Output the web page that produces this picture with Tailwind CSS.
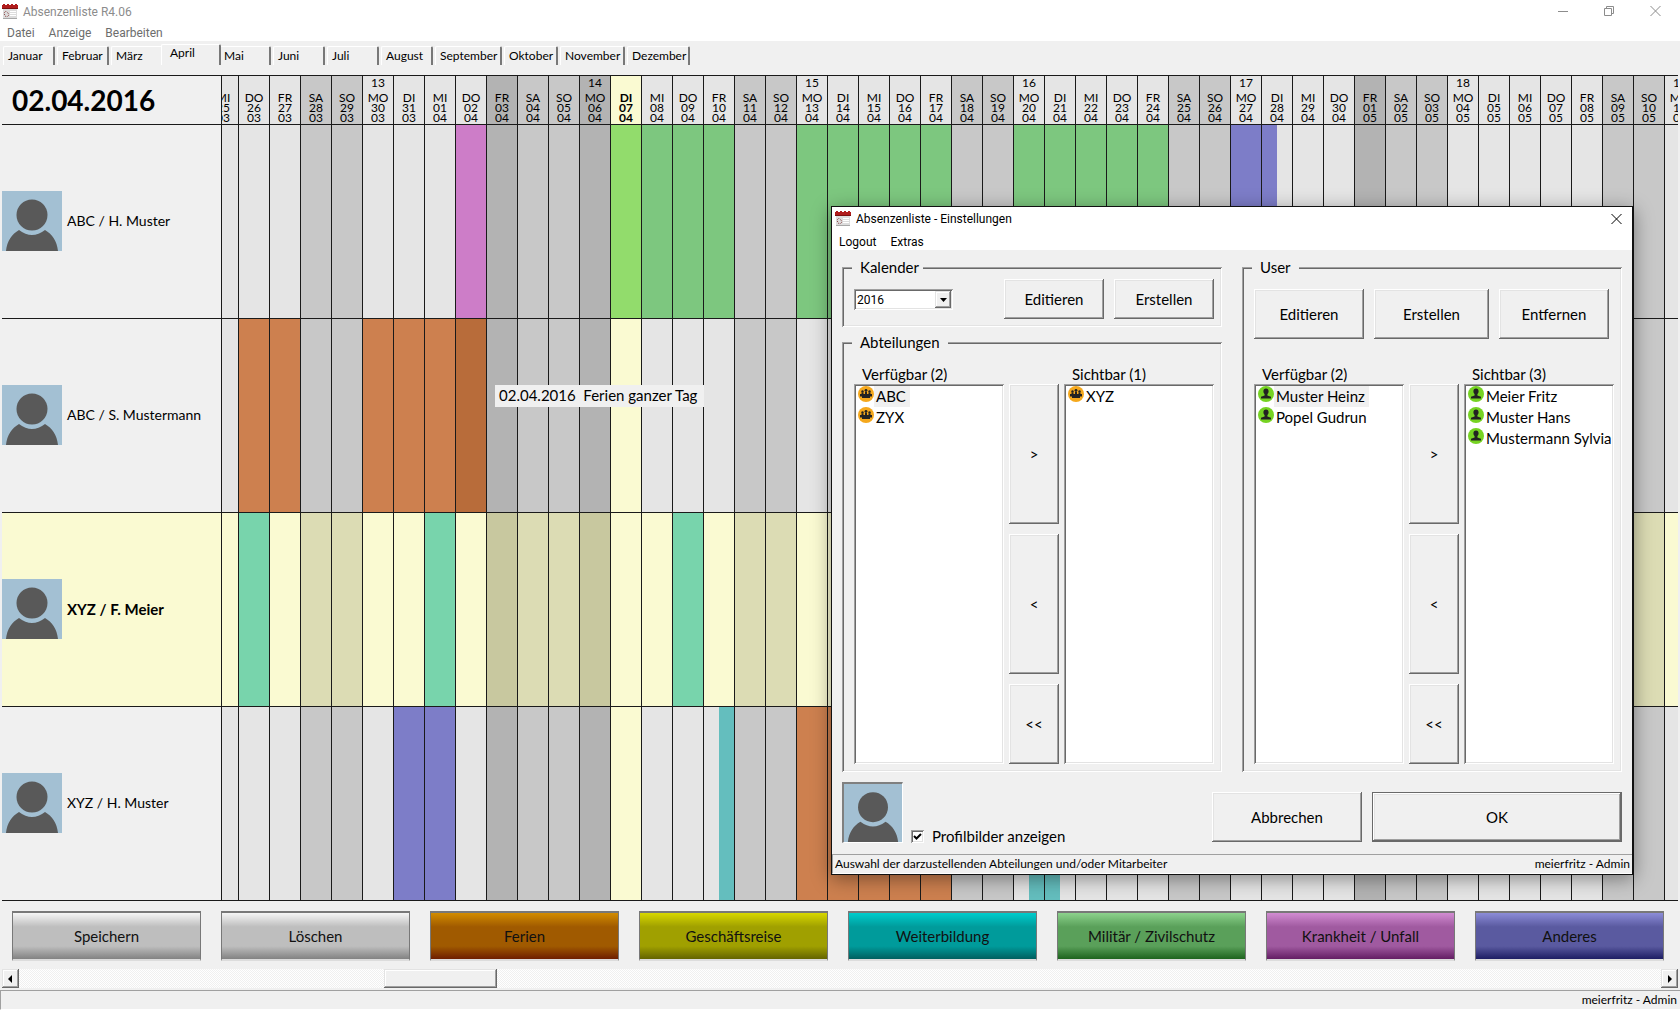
<!DOCTYPE html>
<html lang="de">
<head>
  <meta charset="UTF-8">
  <meta name="viewport" content="width=device-width, initial-scale=1.0">
  <title>Absenzenliste R4.06</title>
  <script src="https://cdn.jsdelivr.net/npm/@tailwindcss/browser@4"></script>
</head>
<body class="h-screen overflow-hidden bg-[#f0f0f0] font-['Lato',sans-serif] text-[15px] leading-5 text-black">

  <!-- Icons -->
  <svg class="hidden">
    <symbol id="icon-kalender" viewBox="0 0 16 16">
      <rect x="1" y="4" width="14" height="11" fill="#dcdcdc"/>
      <rect x="1" y="14" width="14" height="1" fill="#a8a8a8"/>
      <path d="M0 1h1V0h2v1h2V0h2v1h2V0h2v1h2V0h2v1h1v4H0z" fill="#b01c1c"/>
      <rect y="4" width="16" height="1" fill="#7c1010"/>
      <path d="M8 7.500h6M8 9.500h6M8 11.500h6" stroke="#fff"/>
      <path d="M2 9l2-2 2 2 1 2-2 2-2-1z" fill="none" stroke="#8c4646" stroke-dasharray="1 1"/>
    </symbol>
    <symbol id="icon-profil" viewBox="0 0 60 60">
      <rect width="60" height="60" fill="#a3c0d3"/>
      <circle cx="30" cy="24" r="15.5" fill="#595959"/>
      <path d="M4 60C5 50 10 43 17 39Q30 49 43 39C50 43 55 50 56 60Z" fill="#595959"/>
    </symbol>
    <symbol id="icon-abteilung" viewBox="0 0 16 16">
      <circle cx="8" cy="8" r="8" fill="#f5a81c"/>
      <g fill="#222">
        <circle cx="4.5" cy="5.500" r="1.2"/><circle cx="8" cy="4.300" r="1.4"/><circle cx="11.5" cy="5.500" r="1.2"/>
        <path d="M3.500 6.500h2V8h-2zM7 5.500h2V8H7zM10.500 6.500h2V8h-2zM2 8h12v2.500H2zM4 10h8v2H4z"/>
      </g>
    </symbol>
    <symbol id="icon-user" viewBox="0 0 16 16">
      <circle cx="8" cy="8" r="8" fill="#76d322"/>
      <path d="M8 2.500c1.700 0 2.600 1.200 2.600 2.800 0 1.400-.6 2.200-1.200 2.900v1.300l3.600 1.300v1.700H3v-1.700l3.600-1.300V8.200C6 7.500 5.400 6.700 5.400 5.300 5.400 3.700 6.300 2.500 8 2.500z" fill="#222"/>
    </symbol>
  </svg>

  <div class="flex h-full flex-col">
    <!-- Titel und Menü -->
    <header class="h-[41px] bg-white font-['Roboto',sans-serif] text-xs text-[#8c8c8c]">
      <div class="flex h-6 items-center pl-0.5">
        <svg class="size-4"><use href="#icon-kalender"/></svg>
        <h1 class="ml-[5px]">Absenzenliste R4.06</h1>
        <div class="ml-auto flex gap-[34px] pr-[18px]">
          <button aria-label="Minimieren"><svg class="size-3 overflow-visible" fill="none" stroke="#8c8c8c"><path d="M0 5.500h10"/></svg></button>
          <button aria-label="Wiederherstellen"><svg class="size-3 overflow-visible" fill="none" stroke="#8c8c8c"><path d="M.5 2.500h7v7h-7zM2.500 2V.5h7v7H8"/></svg></button>
          <button aria-label="Schliessen"><svg class="size-3 overflow-visible" fill="none" stroke="#8c8c8c"><path d="M.5 0l10 10M10.500 0l-10 10"/></svg></button>
        </div>
      </div>
      <nav class="flex h-[17px] items-center gap-[14px] pl-[7px] text-[#6d6d6d]">
        <button>Datei</button>
        <button>Anzeige</button>
        <button>Bearbeiten</button>
      </nav>
    </header>

    <!-- Monate -->
    <div id="monate" role="tablist" class="flex h-[34px] items-start gap-0.5 pl-[3px] pt-[3px] text-xs"></div>

    <!-- Absenzen -->
    <main class="mx-0.5 min-h-0 flex-1 overflow-hidden">
      <table class="h-full w-[1694px] table-fixed border-separate border-spacing-0 border-t border-[#1a1a1a]">
        <colgroup id="spalten">
          <col class="w-[220px]">
          <col class="w-[17px]">
        </colgroup>
        <thead>
          <tr id="kopf" class="h-[49px]">
            <th class="border-r border-b border-[#1a1a1a] pl-[10px] text-left text-[28px] font-bold">02.04.2016</th>
          </tr>
        </thead>
        <tbody id="zeilen"></tbody>
      </table>
    </main>

    <!-- Absenztypen -->
    <div class="flex h-[68px] items-start gap-5 pt-[10px] pr-4 pl-3 text-[#111]">
      <button class="h-[50px] min-w-0 flex-1 border-x border-t-2 border-b-2 border-[#787878] border-b-[#dcdcdc] bg-[linear-gradient(#f5f5f5,#bebebe_30%,#bebebe_72%,#828282)]">Speichern</button>
      <button class="h-[50px] min-w-0 flex-1 border-x border-t-2 border-b-2 border-[#787878] border-b-[#dcdcdc] bg-[linear-gradient(#f5f5f5,#bebebe_30%,#bebebe_72%,#828282)]">Löschen</button>
      <button class="h-[50px] min-w-0 flex-1 border-x border-t-2 border-b-2 border-[#787878] border-b-[#dcdcdc] bg-[linear-gradient(#d28c00,#a05a00_30%,#a05a00_72%,#6e1e00)]">Ferien</button>
      <button class="h-[50px] min-w-0 flex-1 border-x border-t-2 border-b-2 border-[#787878] border-b-[#dcdcdc] bg-[linear-gradient(#d7d700,#a0a000_30%,#a0a000_72%,#646400)]">Geschäftsreise</button>
      <button class="h-[50px] min-w-0 flex-1 border-x border-t-2 border-b-2 border-[#787878] border-b-[#dcdcdc] bg-[linear-gradient(#00cdcd,#009b9b_30%,#009b9b_72%,#005f5f)]">Weiterbildung</button>
      <button class="h-[50px] min-w-0 flex-1 border-x border-t-2 border-b-2 border-[#787878] border-b-[#dcdcdc] bg-[linear-gradient(#8cd28c,#5aa05a_30%,#5aa05a_72%,#1e641e)]">Militär / Zivilschutz</button>
      <button class="h-[50px] min-w-0 flex-1 border-x border-t-2 border-b-2 border-[#787878] border-b-[#dcdcdc] bg-[linear-gradient(#d28cd2,#a05aa0_30%,#a05aa0_72%,#641e64)]">Krankheit / Unfall</button>
      <button class="h-[50px] min-w-0 flex-1 border-x border-t-2 border-b-2 border-[#787878] border-b-[#dcdcdc] bg-[linear-gradient(#8c8cd7,#5a5aa0_30%,#5a5aa0_72%,#1e1e64)]">Anderes</button>
    </div>

    <!-- Bildlaufleiste -->
    <div class="mx-0.5 flex h-[19px] bg-[repeating-conic-gradient(#f0f0f0_0_25%,#fff_0_50%)] bg-[length:2px_2px]">
      <button aria-label="Zurück" class="flex w-[17px] items-center justify-center bg-[#f0f0f0] pr-0.5 shadow-[inset_-1px_-1px_0_#696969,inset_1px_1px_0_#e3e3e3,inset_-2px_-2px_0_#a0a0a0,inset_2px_2px_0_#fff]">
        <svg class="h-2 w-1"><path d="M4 0v8L0 4z"/></svg>
      </button>
      <div class="flex-1 pl-[365px]">
        <div class="h-full w-[113px] bg-[#f0f0f0] shadow-[inset_-1px_-1px_0_#696969,inset_1px_1px_0_#e3e3e3,inset_-2px_-2px_0_#a0a0a0,inset_2px_2px_0_#fff]"></div>
      </div>
      <button aria-label="Vorwärts" class="flex w-[17px] items-center justify-center bg-[#f0f0f0] shadow-[inset_-1px_-1px_0_#696969,inset_1px_1px_0_#e3e3e3,inset_-2px_-2px_0_#a0a0a0,inset_2px_2px_0_#fff]">
        <svg class="h-2 w-1"><path d="M0 0v8l4-4z"/></svg>
      </button>
    </div>

    <footer class="mt-0.5 flex h-5 items-center justify-end border-t border-b border-l border-[#a0a0a0] border-b-white pr-[3px] text-xs">meierfritz - Admin</footer>
  </div>

  <!-- Einstellungen -->
  <section role="dialog" aria-labelledby="dialog-titel" class="absolute top-[206px] left-[831px] flex w-[803px] flex-col border border-r-2 border-[#111] bg-[#f0f0f0] shadow-[0_4px_18px_rgba(0,0,0,0.4)]">
    <div class="bg-white font-['Roboto',sans-serif] text-xs">
      <div class="flex h-6 items-center pl-[3px]">
        <svg class="size-4"><use href="#icon-kalender"/></svg>
        <h2 id="dialog-titel" class="ml-[5px]">Absenzenliste - Einstellungen</h2>
        <button aria-label="Schliessen" class="mr-[9px] ml-auto"><svg class="size-3 overflow-visible" fill="none" stroke="#000"><path d="M.5 1l10 10M10.500 1l-10 10"/></svg></button>
      </div>
      <nav class="flex h-[19px] items-center gap-[14px] pt-0.5 pl-[7px]">
        <button>Logout</button>
        <button>Extras</button>
      </nav>
    </div>

    <div class="flex justify-between px-[10px] pt-[17px]">
      <div class="flex w-[380px] flex-col gap-[15px]">
        <fieldset class="relative flex h-[60px] items-start gap-[10px] pt-3 pr-2 pl-3 shadow-[inset_1px_1px_0_#a0a0a0,inset_-1px_-1px_0_#fff,inset_2px_2px_0_#696969,inset_-2px_-2px_0_#e3e3e3]">
          <legend class="absolute -top-[10px] left-[10px] bg-[#f0f0f0] pr-1 pl-2">Kalender</legend>
          <div class="relative mt-[10px] mr-auto">
            <select aria-label="Kalenderjahr" class="block h-[21px] w-[99px] appearance-none rounded-none bg-white pl-[3px] font-['Roboto',sans-serif] text-xs shadow-[inset_1px_1px_0_#a0a0a0,inset_-1px_-1px_0_#fff,inset_2px_2px_0_#696969,inset_-2px_-2px_0_#e3e3e3]">
              <option>2016</option>
            </select>
            <span class="pointer-events-none absolute top-0.5 right-0.5 flex h-[17px] w-4 items-center justify-center bg-[#f0f0f0] shadow-[inset_-1px_-1px_0_#696969,inset_1px_1px_0_#e3e3e3,inset_-2px_-2px_0_#a0a0a0,inset_2px_2px_0_#fff]">
              <svg class="h-1 w-[7px]"><path d="M0 0h7L3.500 4z"/></svg>
            </span>
          </div>
          <button class="h-10 w-[100px] pb-px shadow-[inset_-1px_-1px_0_#696969,inset_1px_1px_0_#fff,inset_-2px_-2px_0_#a0a0a0,inset_2px_2px_0_#e3e3e3]">Editieren</button>
          <button class="h-10 w-[100px] pb-px shadow-[inset_-1px_-1px_0_#696969,inset_1px_1px_0_#fff,inset_-2px_-2px_0_#a0a0a0,inset_2px_2px_0_#e3e3e3]">Erstellen</button>
        </fieldset>

        <fieldset class="relative h-[430px] pt-[22px] pr-2 pl-3 shadow-[inset_1px_1px_0_#a0a0a0,inset_-1px_-1px_0_#fff,inset_2px_2px_0_#696969,inset_-2px_-2px_0_#e3e3e3]">
          <legend class="absolute -top-[10px] left-[10px] bg-[#f0f0f0] px-2">Abteilungen</legend>
          <div class="grid grid-cols-[150px_50px_150px] gap-x-[5px]">
            <h3 class="pl-2">Verfügbar (2)</h3>
            <h3 class="col-start-3 pl-2">Sichtbar (1)</h3>
            <ul class="h-[380px] bg-white px-1 pt-0.5 shadow-[inset_1px_1px_0_#a0a0a0,inset_-1px_-1px_0_#fff,inset_2px_2px_0_#696969,inset_-2px_-2px_0_#e3e3e3]">
              <li class="flex h-[21px]"><svg class="size-4"><use href="#icon-abteilung"/></svg><span class="bg-[#f0f0f0] pr-1 pl-0.5">ABC</span></li>
              <li class="flex h-[21px]"><svg class="size-4"><use href="#icon-abteilung"/></svg><span class="pl-0.5">ZYX</span></li>
            </ul>
            <div class="grid grid-rows-[140px_140px_80px] gap-[10px]">
              <button class="pb-px shadow-[inset_-1px_-1px_0_#696969,inset_1px_1px_0_#fff,inset_-2px_-2px_0_#a0a0a0,inset_2px_2px_0_#e3e3e3]">&gt;</button>
              <button class="pb-px shadow-[inset_-1px_-1px_0_#696969,inset_1px_1px_0_#fff,inset_-2px_-2px_0_#a0a0a0,inset_2px_2px_0_#e3e3e3]">&lt;</button>
              <button class="pb-px shadow-[inset_-1px_-1px_0_#696969,inset_1px_1px_0_#fff,inset_-2px_-2px_0_#a0a0a0,inset_2px_2px_0_#e3e3e3]">&lt;&lt;</button>
            </div>
            <ul class="h-[380px] bg-white px-1 pt-0.5 shadow-[inset_1px_1px_0_#a0a0a0,inset_-1px_-1px_0_#fff,inset_2px_2px_0_#696969,inset_-2px_-2px_0_#e3e3e3]">
              <li class="flex h-[21px]"><svg class="size-4"><use href="#icon-abteilung"/></svg><span class="pl-0.5">XYZ</span></li>
            </ul>
          </div>
        </fieldset>
      </div>

      <fieldset class="relative flex w-[380px] flex-col justify-between pt-[22px] pr-2 pb-2 pl-3 shadow-[inset_1px_1px_0_#a0a0a0,inset_-1px_-1px_0_#fff,inset_2px_2px_0_#696969,inset_-2px_-2px_0_#e3e3e3]">
        <legend class="absolute -top-[10px] left-[10px] bg-[#f0f0f0] px-2">User</legend>
        <div class="grid h-[50px] grid-cols-[110px_115px_110px] gap-[10px]">
          <button class="pb-px shadow-[inset_-1px_-1px_0_#696969,inset_1px_1px_0_#fff,inset_-2px_-2px_0_#a0a0a0,inset_2px_2px_0_#e3e3e3]">Editieren</button>
          <button class="pb-px shadow-[inset_-1px_-1px_0_#696969,inset_1px_1px_0_#fff,inset_-2px_-2px_0_#a0a0a0,inset_2px_2px_0_#e3e3e3]">Erstellen</button>
          <button class="pb-px shadow-[inset_-1px_-1px_0_#696969,inset_1px_1px_0_#fff,inset_-2px_-2px_0_#a0a0a0,inset_2px_2px_0_#e3e3e3]">Entfernen</button>
        </div>
        <div class="grid grid-cols-[150px_50px_150px] gap-x-[5px]">
          <h3 class="pl-2">Verfügbar (2)</h3>
          <h3 class="col-start-3 pl-2">Sichtbar (3)</h3>
          <ul class="h-[380px] bg-white px-1 pt-0.5 shadow-[inset_1px_1px_0_#a0a0a0,inset_-1px_-1px_0_#fff,inset_2px_2px_0_#696969,inset_-2px_-2px_0_#e3e3e3]">
            <li class="flex h-[21px]"><svg class="size-4"><use href="#icon-user"/></svg><span class="bg-[#f0f0f0] pr-1 pl-0.5">Muster Heinz</span></li>
            <li class="flex h-[21px]"><svg class="size-4"><use href="#icon-user"/></svg><span class="pl-0.5">Popel Gudrun</span></li>
          </ul>
          <div class="grid grid-rows-[140px_140px_80px] gap-[10px]">
            <button class="pb-px shadow-[inset_-1px_-1px_0_#696969,inset_1px_1px_0_#fff,inset_-2px_-2px_0_#a0a0a0,inset_2px_2px_0_#e3e3e3]">&gt;</button>
            <button class="pb-px shadow-[inset_-1px_-1px_0_#696969,inset_1px_1px_0_#fff,inset_-2px_-2px_0_#a0a0a0,inset_2px_2px_0_#e3e3e3]">&lt;</button>
            <button class="pb-px shadow-[inset_-1px_-1px_0_#696969,inset_1px_1px_0_#fff,inset_-2px_-2px_0_#a0a0a0,inset_2px_2px_0_#e3e3e3]">&lt;&lt;</button>
          </div>
          <ul class="h-[380px] bg-white px-1 pt-0.5 whitespace-nowrap shadow-[inset_1px_1px_0_#a0a0a0,inset_-1px_-1px_0_#fff,inset_2px_2px_0_#696969,inset_-2px_-2px_0_#e3e3e3]">
            <li class="flex h-[21px]"><svg class="size-4 shrink-0"><use href="#icon-user"/></svg><span class="pl-0.5">Meier Fritz</span></li>
            <li class="flex h-[21px]"><svg class="size-4 shrink-0"><use href="#icon-user"/></svg><span class="pl-0.5">Muster Hans</span></li>
            <li class="flex h-[21px]"><svg class="size-4 shrink-0"><use href="#icon-user"/></svg><span class="pl-0.5">Mustermann Sylvia</span></li>
          </ul>
        </div>
      </fieldset>
    </div>

    <div class="flex gap-2 px-[10px] pt-[10px] pb-[11px]">
      <div class="border-t-2 border-l-2 border-r border-b border-[#808080] border-r-white border-b-white"><svg class="size-[58px]"><use href="#icon-profil"/></svg></div>
      <label class="mr-auto flex items-center gap-2 self-end leading-[14px]">
        <input type="checkbox" checked class="peer size-[13px] appearance-none bg-white shadow-[inset_1px_1px_0_#a0a0a0,inset_-1px_-1px_0_#fff,inset_2px_2px_0_#696969,inset_-2px_-2px_0_#e3e3e3]">
        <svg class="pointer-events-none absolute hidden size-[13px] peer-checked:block" fill="none" stroke="#000" stroke-width="2"><path d="M3 6l2.500 2.500L10 4"/></svg>
        Profilbilder anzeigen
      </label>
      <div class="flex gap-[10px] pt-[10px]">
        <button class="h-[50px] w-[150px] pb-px shadow-[inset_-1px_-1px_0_#696969,inset_1px_1px_0_#fff,inset_-2px_-2px_0_#a0a0a0,inset_2px_2px_0_#e3e3e3]">Abbrechen</button>
        <button class="h-[50px] w-[250px] border border-[#696969] pb-px shadow-[inset_-1px_-1px_0_#696969,inset_1px_1px_0_#fff,inset_-2px_-2px_0_#a0a0a0,inset_2px_2px_0_#e3e3e3]">OK</button>
      </div>
    </div>

    <div class="flex h-5 items-center justify-between border-t border-b border-l border-[#a0a0a0] border-b-white px-0.5 text-xs">
      <span>Auswahl der darzustellenden Abteilungen und/oder Mitarbeiter</span>
      <span>meierfritz - Admin</span>
    </div>
  </section>

  <script>
    const monate = [
      ["Januar", "w-[52px]"], ["Februar", "w-[52px]"], ["März", "w-[52px]"], ["April", "w-[60px]"],
      ["Mai", "w-[52px]"], ["Juni", "w-[52px]"], ["Juli", "w-[52px]"], ["August", "w-[52px]"],
      ["September", "w-[67px]"], ["Oktober", "w-[54px]"], ["November", "w-[65px]"], ["Dezember", "w-[63px]"]
    ];
    document.getElementById("monate").innerHTML = monate.map(([name, breite]) => {
      const aktiv = name === "April";
      const form = aktiv ? "z-10 -mr-1 -ml-1 h-[21px] pb-1 pl-2" : "mt-0.5 h-[19px] pl-1";
      return `<button role="tab" aria-selected="${aktiv}" class="${breite} ${form} shrink-0 rounded-t-xs border-t border-l border-r-2 border-white border-r-[#787878] bg-[#f0f0f0] text-left leading-4">${name}</button>`;
    }).join("");

    // Tage vom 25.03. bis 11.05.
    const wochentage = ["MI", "DO", "FR", "SA", "SO", "MO", "DI"];
    const feiertage = ["03.04", "06.04", "01.05"];
    const heute = "07.04";
    const zwei = n => String(n).padStart(2, "0");
    const tage = [];
    let woche = 13;
    for (let i = 0; i < 48; i++) {
      let tag = 25 + i, monat = 3;
      if (tag > 31) { tag -= 31; monat = 4; }
      if (monat === 4 && tag > 30) { tag -= 30; monat = 5; }
      const name = wochentage[i % 7];
      const id = zwei(tag) + "." + zwei(monat);
      let art = "normal";
      if (name === "SA" || name === "SO") art = "wochenende";
      if (feiertage.includes(id)) art = "feiertag";
      if (id === heute) art = "heute";
      tage.push({ id, name, art, tag: zwei(tag), monat: zwei(monat), woche: name === "MO" ? woche++ : "" });
    }

    const farben = { normal: "bg-[#e5e5e5]", wochenende: "bg-[#c8c8c8]", feiertag: "bg-[#b3b3b3]", heute: "bg-[#fafad2]" };
    const farbenEigene = { normal: "bg-[#fafad2]", wochenende: "bg-[#dcdcb4]", feiertag: "bg-[#c8c89f]", heute: "bg-[#fafad2]" };
    const ferien = "bg-[#cd804f]", ferienAktiv = "bg-[#b86c3a]", militaer = "bg-[#7dc77f]", militaerHeute = "bg-[#92dc6c]";
    const krank = "bg-[#cd7dc8]", anderes = "bg-[#7d7dc8]", kurs = "bg-[#64bebe]", kursEigen = "bg-[#78d4ac]";

    const personen = [
      { name: "ABC / H. Muster", tage: {
        "02.04": krank, "07.04": militaerHeute, "08.04": militaer, "09.04": militaer, "10.04": militaer,
        "13.04": militaer, "14.04": militaer, "15.04": militaer, "16.04": militaer, "17.04": militaer,
        "20.04": militaer, "21.04": militaer, "22.04": militaer, "23.04": militaer, "24.04": militaer,
        "27.04": anderes }, halb: { "28.04": anderes + " left-0" } },
      { name: "ABC / S. Mustermann", tage: {
        "26.03": ferien, "27.03": ferien, "30.03": ferien, "31.03": ferien, "01.04": ferien, "02.04": ferienAktiv },
        halb: {}, hinweis: "02.04" },
      { name: "XYZ / F. Meier", eigene: true, tage: { "26.03": kursEigen, "01.04": kursEigen, "09.04": kursEigen }, halb: {} },
      { name: "XYZ / H. Muster", tage: {
        "31.03": anderes, "01.04": anderes,
        "13.04": ferien, "14.04": ferien, "15.04": ferien, "16.04": ferien, "17.04": ferien },
        halb: { "10.04": kurs + " right-0", "20.04": kurs + " right-0", "21.04": kurs + " left-0" } }
    ];

    document.getElementById("spalten").innerHTML += '<col class="w-[31px]">'.repeat(tage.length - 1);

    document.getElementById("kopf").innerHTML += tage.map(t => `
      <th class="overflow-hidden border-r border-b border-[#1a1a1a] p-0 ${farben[t.art]}">
        <div class="flex justify-end text-xs leading-[10px] ${t.art === "heute" ? "font-bold" : "font-normal"}">
          <div class="w-[30px] shrink-0 text-center"><div class="mb-[5px] h-[10px]">${t.woche}</div>${t.name}<br>${t.tag}<br>${t.monat}</div>
        </div>
      </th>`).join("");

    document.getElementById("zeilen").innerHTML = personen.map(p => `
      <tr>
        <th class="border-r border-b border-[#1a1a1a] p-0 pb-0.5 text-left ${p.eigene ? "bg-[#fafad2] font-bold" : "text-sm font-normal"}">
          <div class="flex items-center gap-[5px]"><svg class="size-[60px]"><use href="#icon-profil"/></svg>${p.name}</div>
        </th>
        ${tage.map(t => `<td class="relative border-r border-b border-[#1a1a1a] p-0 ${p.tage[t.id] || (p.eigene ? farbenEigene : farben)[t.art]}">${
          p.halb[t.id] ? `<div class="absolute inset-y-0 w-1/2 ${p.halb[t.id]}"></div>` : ""}${
          p.hinweis === t.id ? '<div role="tooltip" class="absolute top-[66px] left-[39px] z-10 w-[209px] bg-[#f0f0f0] pb-0.5 pl-1 whitespace-pre">02.04.2016  Ferien ganzer Tag</div>' : ""}</td>`).join("")}
      </tr>`).join("");
  </script>
</body>
</html>
